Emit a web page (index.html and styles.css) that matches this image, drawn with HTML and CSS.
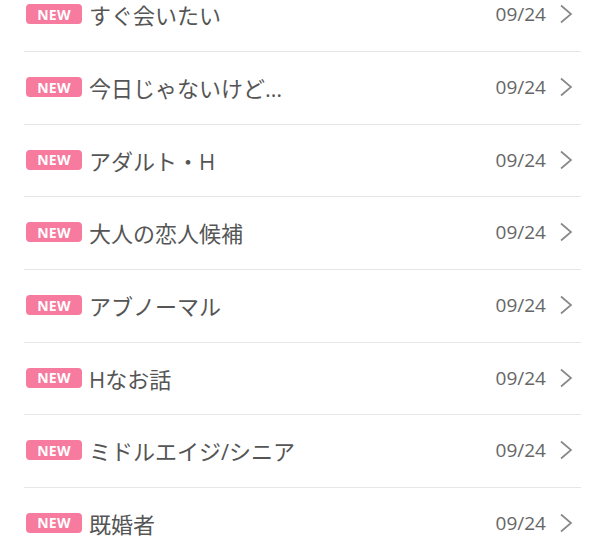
FILE: index.html
```html
<!DOCTYPE html>
<html lang="ja">
<head>
    <meta charset="UTF-8">
    <meta name="viewport" content="width=device-width, initial-scale=1.0">
    <title>掲示板</title>
    <link rel="stylesheet" href="styles.css">
</head>
<body>
    <ul class="board-list">
        <li class="board-item"><span class="badge">NEW</span><span class="title">すぐ会いたい</span><span class="date">09/24</span><svg class="chevron" viewBox="0 0 14 20"><path d="M2 1.5 L12 10 L2 18.5"/></svg></li>
        <li class="board-item"><span class="badge">NEW</span><span class="title">今日じゃないけど…</span><span class="date">09/24</span><svg class="chevron" viewBox="0 0 14 20"><path d="M2 1.5 L12 10 L2 18.5"/></svg></li>
        <li class="board-item"><span class="badge">NEW</span><span class="title">アダルト・H</span><span class="date">09/24</span><svg class="chevron" viewBox="0 0 14 20"><path d="M2 1.5 L12 10 L2 18.5"/></svg></li>
        <li class="board-item"><span class="badge">NEW</span><span class="title">大人の恋人候補</span><span class="date">09/24</span><svg class="chevron" viewBox="0 0 14 20"><path d="M2 1.5 L12 10 L2 18.5"/></svg></li>
        <li class="board-item"><span class="badge">NEW</span><span class="title">アブノーマル</span><span class="date">09/24</span><svg class="chevron" viewBox="0 0 14 20"><path d="M2 1.5 L12 10 L2 18.5"/></svg></li>
        <li class="board-item"><span class="badge">NEW</span><span class="title">Hなお話</span><span class="date">09/24</span><svg class="chevron" viewBox="0 0 14 20"><path d="M2 1.5 L12 10 L2 18.5"/></svg></li>
        <li class="board-item"><span class="badge">NEW</span><span class="title">ミドルエイジ/シニア</span><span class="date">09/24</span><svg class="chevron" viewBox="0 0 14 20"><path d="M2 1.5 L12 10 L2 18.5"/></svg></li>
        <li class="board-item"><span class="badge">NEW</span><span class="title">既婚者</span><span class="date">09/24</span><svg class="chevron" viewBox="0 0 14 20"><path d="M2 1.5 L12 10 L2 18.5"/></svg></li>
    </ul>
</body>
</html>
```

FILE: styles.css
```css
* { margin: 0; padding: 0; box-sizing: border-box; }
body { background: #fff; font-family: "Open Sans", "Noto Sans CJK JP", sans-serif; color: #555; overflow: hidden; }
.board-list { list-style: none; margin-top: -20.7px; padding: 0 21px 0 24px; }
.board-item { display: flex; align-items: center; height: 72.67px; border-bottom: 1px solid #e6e6e6; padding: 0 8px 1.5px 2px; }
.badge { display: inline-flex; align-items: center; justify-content: center; width: 56px; height: 20px; border-radius: 4px; background: #f67b9e; color: #fff; font-size: 14px; font-weight: 700; letter-spacing: 0.3px; margin-right: 7px; }
.title { flex: 1; font-size: 22px; color: #555; white-space: nowrap; }
.date { font-size: 19px; color: #666; margin-right: 13px; }
.chevron { width: 14px; height: 20px; fill: none; stroke: #888; stroke-width: 1.7; }
```
